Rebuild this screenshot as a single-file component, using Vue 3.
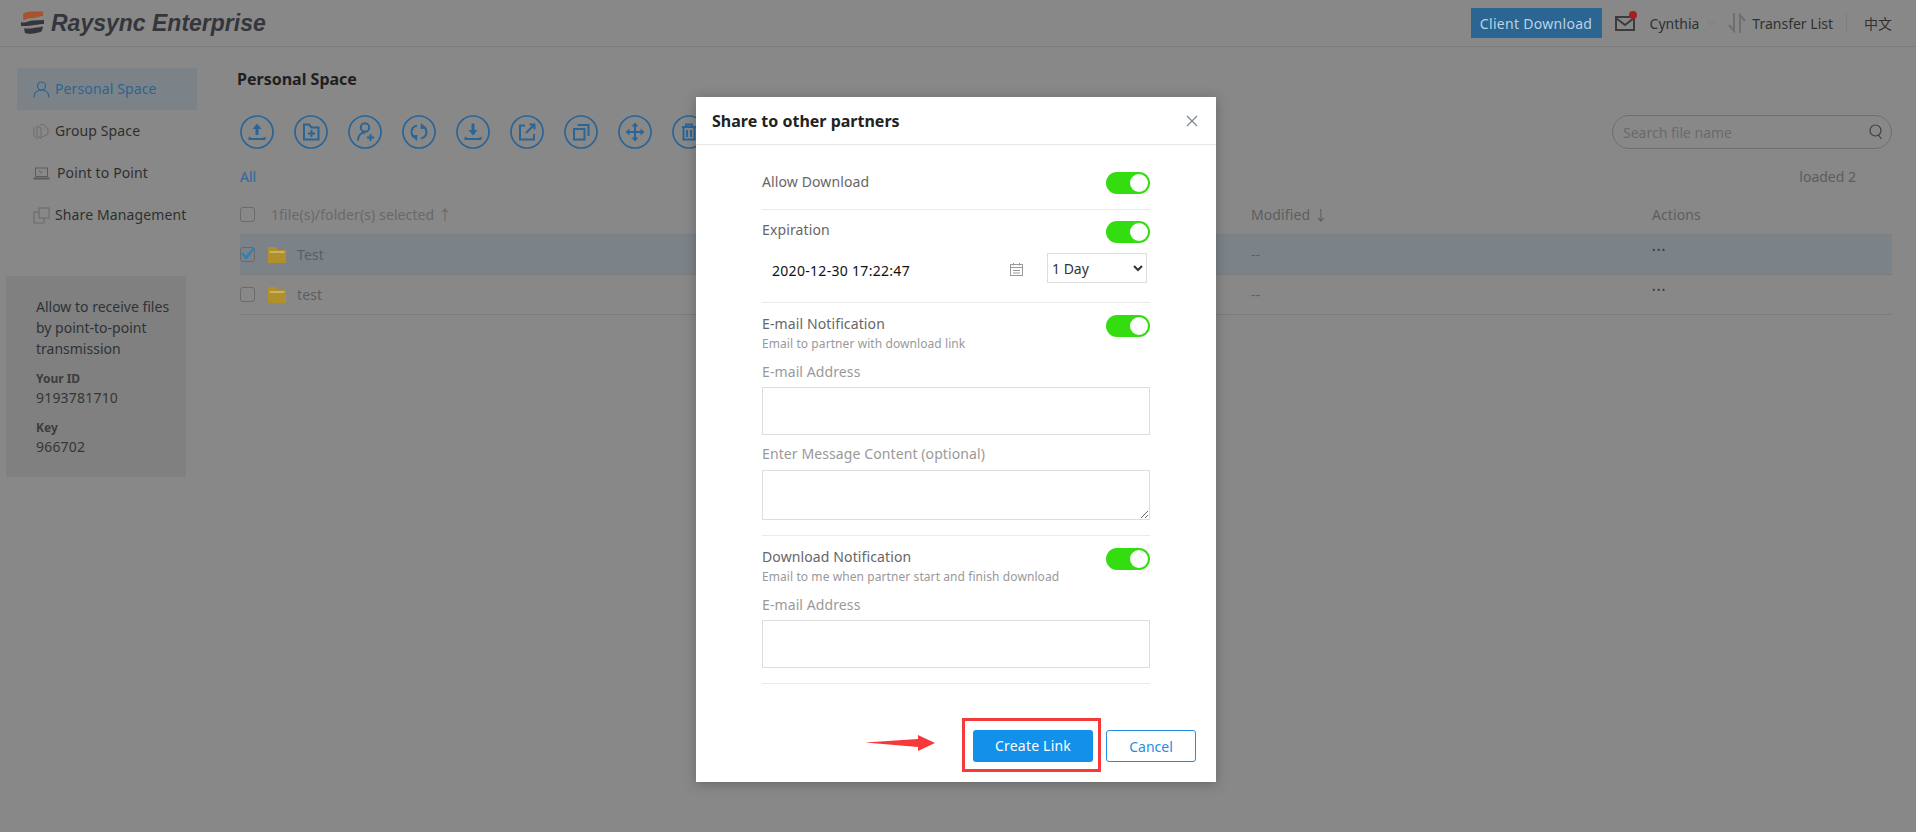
<script setup>
const navItems = [
  { label: 'Personal Space', icon: 'user', active: true },
  { label: 'Group Space', icon: 'group' },
  { label: 'Point to Point', icon: 'laptop', wide: true },
  { label: 'Share Management', icon: 'share' }
]
const rows = [
  { name: 'Test', selected: true },
  { name: 'test', selected: false }
]
</script>

<template>
  <div class="page">
    <header class="topbar">
      <div class="logo">
        <svg class="logo-mark" width="25" height="24" viewBox="0 0 25 24">
          <path d="M3 4 C3 1.5 8 0.5 14 0.5 L23 0.5 L23 5 C19 5 17 7 12 7 C8 7 5 8 3.5 10 Z" fill="#a9522e" />
          <path d="M1 11 C5 13 9 9.5 13 9.5 L24 9 L24 13 C19 13 8 15.5 1 15 Z" fill="#34363c" />
          <path d="M4 17.5 C9 18 18 16.5 23 15.5 L22 20 C19 22.5 8 23.5 5 22 Z" fill="#34363c" />
        </svg>
        <span class="logo-text">Raysync Enterprise</span>
      </div>
      <div class="top-actions">
        <button class="client-btn">Client Download</button>
        <span class="mail">
          <svg width="20" height="15" viewBox="0 0 20 15" fill="none" stroke="#3c3c3c" stroke-width="2">
            <rect x="1" y="1" width="18" height="13" />
            <path d="M1 2 L10 9 L19 2" />
          </svg>
          <i class="dot"></i>
        </span>
        <span class="top-text cynthia">Cynthia</span>
        <svg class="chev" width="9" height="6" viewBox="0 0 9 6" fill="none" stroke="#7c7c7c"><path d="M1 1 L4.5 5 L8 1" /></svg>
        <svg class="transfer" width="18" height="20" viewBox="0 0 18 20" fill="none" stroke="#6f6f6f" stroke-width="2">
          <path d="M6 0 V18 L1 12" />
          <path d="M12 20 V2 L17 8" />
        </svg>
        <span class="top-text transfer-text">Transfer List</span>
        <i class="top-sep"></i>
        <span class="top-text lang">中文</span>
      </div>
    </header>

    <div class="body">
      <aside class="sidebar">
        <nav>
          <div v-for="item in navItems" :key="item.label" class="nav-item" :class="{ active: item.active, wide: item.wide }">
            <svg v-if="item.icon === 'user'" class="nav-icon" width="17" height="17" viewBox="0 0 17 17" fill="none" stroke="#2d6491" stroke-width="1.2">
              <circle cx="8.5" cy="5" r="4" />
              <path d="M1 16.5 C1 11.5 4 9 8.5 9 C13 9 16 11.5 16 16.5" />
            </svg>
            <svg v-else-if="item.icon === 'group'" class="nav-icon" width="17" height="17" viewBox="0 0 17 17" fill="none" stroke="#6c6c6c">
              <path d="M1 4 V13 L5 16" />
              <path d="M4 3 V13 L8 15.5 V5 Z" />
              <path d="M7 2 L10 1 L15 6 L15 11 L9 14" />
            </svg>
            <svg v-else-if="item.icon === 'laptop'" class="nav-icon" width="17" height="17" viewBox="0 0 17 17" fill="none" stroke="#5c5c5c">
              <rect x="2.5" y="3" width="12" height="8.5" />
              <path d="M0.5 13.5 H16.5" stroke-width="2" />
              <path d="M6 6 L9 8" />
            </svg>
            <svg v-else class="nav-icon" width="17" height="17" viewBox="0 0 17 17" fill="none" stroke="#6a6a6a" stroke-width="1.1">
              <path d="M6 5 H1 V16 H11 V11" />
              <rect x="6" y="1" width="10" height="10" />
            </svg>
            <span class="nav-label">{{ item.label }}</span>
          </div>
        </nav>
        <div class="p2p">
          <p class="p2p-text">Allow to receive files by point-to-point transmission</p>
          <div class="p2p-label first">Your ID</div>
          <div class="p2p-value">9193781710</div>
          <div class="p2p-label">Key</div>
          <div class="p2p-value">966702</div>
        </div>
      </aside>

      <main class="main">
        <h2 class="heading">Personal Space</h2>
        <div class="toolbar">
          <div class="tools">
            <svg class="tool" viewBox="0 0 34 34" fill="none" stroke="#2b6596" stroke-width="2">
              <circle cx="17" cy="17" r="16" stroke-width="1.7" />
              <path d="M17 8.5 L12.5 14 H15.5 V20 H18.5 V14 H21.5 Z" fill="#2b6596" stroke="none" />
              <path d="M9.5 22 V24 H24.5 V22" />
            </svg>
            <svg class="tool" viewBox="0 0 34 34" fill="none" stroke="#2b6596" stroke-width="2">
              <circle cx="17" cy="17" r="16" stroke-width="1.7" />
              <path d="M10 9.5 H15 L17.5 12.5 H24.5 V24.5 H10 Z" />
              <path d="M17.5 15 V22 M14 18.5 H21" />
            </svg>
            <svg class="tool" viewBox="0 0 34 34" fill="none" stroke="#2b6596" stroke-width="2">
              <circle cx="17" cy="17" r="16" stroke-width="1.7" />
              <circle cx="17" cy="12.5" r="4.2" />
              <path d="M10 25.5 C10 21 12.5 17.5 17 17.5" />
              <path d="M22.5 19 V26 M19 22.5 H26" />
            </svg>
            <svg class="tool" viewBox="0 0 34 34" fill="none" stroke="#2b6596" stroke-width="2">
              <circle cx="17" cy="17" r="16" stroke-width="1.7" />
              <path d="M15 10.5 C11.5 11.5 9.5 14 9.5 17 C9.5 18.8 10.2 20.4 11.5 21.8" />
              <path d="M19 23.5 C22.5 22.5 24.5 20 24.5 17 C24.5 15.2 23.8 13.6 22.5 12.2" />
              <path d="M9 20.5 L15.5 20 L15 26 Z M25 13.5 L18.5 14 L19 8 Z" fill="#2b6596" stroke="none" />
            </svg>
            <svg class="tool" viewBox="0 0 34 34" fill="none" stroke="#2b6596" stroke-width="2">
              <circle cx="17" cy="17" r="16" stroke-width="1.7" />
              <path d="M17 20.5 L12.5 15 H15.5 V8.5 H18.5 V15 H21.5 Z" fill="#2b6596" stroke="none" />
              <path d="M9.5 22 V24 H24.5 V22" />
            </svg>
            <svg class="tool" viewBox="0 0 34 34" fill="none" stroke="#2b6596" stroke-width="2">
              <circle cx="17" cy="17" r="16" stroke-width="1.7" />
              <path d="M15 10.5 H10 V24.5 H24 V19" />
              <path d="M16 18 L24.5 9.5 M19.5 9.5 H24.5 V14.5" />
            </svg>
            <svg class="tool" viewBox="0 0 34 34" fill="none" stroke="#2b6596" stroke-width="2">
              <circle cx="17" cy="17" r="16" stroke-width="1.7" />
              <rect x="10" y="14" width="10.5" height="10.5" />
              <path d="M13.5 10 H24.5 V21" />
            </svg>
            <svg class="tool" viewBox="0 0 34 34" fill="none" stroke="#2b6596" stroke-width="2">
              <circle cx="17" cy="17" r="16" stroke-width="1.7" />
              <path d="M17 9 V25 M9 17 H25" />
              <path d="M17 7.5 L13.5 11.5 H20.5 Z M17 26.5 L13.5 22.5 H20.5 Z M7.5 17 L11.5 13.5 V20.5 Z M26.5 17 L22.5 13.5 V20.5 Z" fill="#2b6596" stroke="none" />
            </svg>
            <svg class="tool" viewBox="0 0 34 34" fill="none" stroke="#2b6596" stroke-width="2">
              <circle cx="17" cy="17" r="16" stroke-width="1.7" />
              <path d="M10 12 H24 M14 12 V9.5 H20 V12 M11.5 12 V24.5 H22.5 V12 M15 15 V22 M19 15 V22" />
            </svg>
          </div>
          <div class="search">
            <span class="search-text">Search file name</span>
            <svg width="14" height="16" viewBox="0 0 14 16" fill="none" stroke="#3f3f3f" stroke-width="1.2">
              <circle cx="6.5" cy="6.5" r="5.5" />
              <path d="M9.5 11 L12.5 15" />
            </svg>
          </div>
        </div>
        <div class="crumbs">
          <span class="all">All</span>
          <span class="loaded">loaded 2</span>
        </div>

        <div class="grid-row table-head">
          <div class="name-cell">
            <i class="check"></i>
            <span class="sel-text">1file(s)/folder(s) selected ↑</span>
          </div>
          <div>Modified ↓</div>
          <div>Actions</div>
        </div>
        <div v-for="row in rows" :key="row.name" class="grid-row file-row" :class="{ selected: row.selected }">
          <div class="name-cell">
            <i class="check">
              <svg v-if="row.selected" width="15" height="15" viewBox="0 0 15 15" fill="none" stroke="#2e7fb8" stroke-width="2.4">
                <path d="M2 7 L6 12 L14 2" />
              </svg>
            </i>
            <svg class="folder" width="18" height="16" viewBox="0 0 18 16">
              <path d="M0 0 H8 L10 3 H18 V16 H0 Z" fill="#b0902a" />
              <rect x="1.5" y="4" width="15" height="2" fill="#c8b26a" />
            </svg>
            <span>{{ row.name }}</span>
          </div>
          <div>--</div>
          <div class="dots">•••</div>
        </div>
      </main>
    </div>

    <section class="modal">
      <header class="modal-head">
        <h3>Share to other partners</h3>
        <svg width="12" height="12" viewBox="0 0 12 12" stroke="#7f8a94" stroke-width="1.3" fill="none">
          <path d="M1 1 L11 11 M11 1 L1 11" />
        </svg>
      </header>

      <div class="form">
        <div class="section s-allow">
          <div class="line">
            <span class="label">Allow Download</span>
            <i class="toggle"></i>
          </div>
        </div>

        <div class="section s-exp">
          <div class="line">
            <span class="label">Expiration</span>
            <i class="toggle"></i>
          </div>
          <div class="date-row">
            <span class="date">2020-12-30 17:22:47</span>
            <svg class="cal" width="13" height="13" viewBox="0 0 13 13" fill="none" stroke="#999">
              <rect x="0.5" y="1.5" width="12" height="11" />
              <path d="M0.5 4.5 H12.5 M3.5 0 V2.5 M9.5 0 V2.5 M3 7.5 H10 M3 10 H10" />
            </svg>
            <select class="period">
              <option>1 Day</option>
              <option>7 Days</option>
            </select>
          </div>
        </div>

        <div class="section s-mail">
          <div class="line">
            <div>
              <div class="label">E-mail Notification</div>
              <div class="hint">Email to partner with download link</div>
            </div>
            <i class="toggle"></i>
          </div>
          <div class="field-label first">E-mail Address</div>
          <input class="text-input mail-input" type="text" />
          <div class="field-label second">Enter Message Content (optional)</div>
          <textarea class="text-area"></textarea>
        </div>

        <div class="section s-notify">
          <div class="line">
            <div>
              <div class="label">Download Notification</div>
              <div class="hint">Email to me when partner start and finish download</div>
            </div>
            <i class="toggle"></i>
          </div>
          <div class="field-label first">E-mail Address</div>
          <input class="text-input notify-input" type="text" />
        </div>
      </div>

      <footer class="modal-foot">
        <svg class="arrow" width="71" height="17" viewBox="0 0 71 17">
          <path d="M0 7.5 L53 4 L53 0 L70 8 L53 16 L53 12 Z" fill="#f63a3a" />
        </svg>
        <span class="highlight">
          <button class="primary">Create Link</button>
        </span>
        <button class="ghost">Cancel</button>
      </footer>
    </section>
  </div>
</template>

<style scoped>
.page {
  position: relative;
  width: 1916px;
  height: 832px;
  overflow: hidden;
  background: #888888;
  color: #2f2f2f;
  font-family: "Noto Sans", "Noto Sans CJK SC", sans-serif;
  font-size: 14px;
}
.topbar {
  height: 46px;
  border-bottom: 1px solid #7b7b7b;
  display: flex;
  align-items: center;
  justify-content: space-between;
  padding: 0 24px 0 20px;
}
.logo { display: flex; align-items: center; gap: 6px; }
.logo-text {
  font-family: "Liberation Sans", sans-serif;
  font-weight: 700;
  font-style: italic;
  font-size: 23px;
  color: #34363c;
}
.top-actions { display: flex; align-items: center; }
.client-btn {
  width: 131px;
  height: 30px;
  border: 0;
  background: #2b6591;
  color: #b9d3e6;
  font: inherit;
  letter-spacing: 0.3px;
  padding: 0;
}
.mail { position: relative; display: flex; margin-left: 13px; }
.dot {
  position: absolute;
  top: -5px;
  right: -2px;
  width: 8px;
  height: 8px;
  border-radius: 50%;
  background: #a31f24;
}
.top-text { color: #2f3133; white-space: nowrap; }
.cynthia { margin-left: 15px; }
.chev { margin-left: 8px; }
.transfer { margin-left: 12px; }
.transfer-text { margin-left: 6px; }
.top-sep { width: 1px; height: 18px; background: #7d7d7d; margin: 0 17px 0 13px; }
.lang { font-size: 14px; }
.body { display: flex; }
.sidebar { width: 240px; flex: none; padding-top: 21px; }
.nav-item {
  width: 180px;
  height: 42px;
  box-sizing: border-box;
  margin-left: 17px;
  padding-left: 16px;
  display: flex;
  align-items: center;
  gap: 5px;
  color: #2f2f2f;
  white-space: nowrap;
  letter-spacing: 0.12px;
}
.nav-label { position: relative; top: -1px; }
.nav-item.wide { gap: 7px; }
.nav-item.active { background: #7c8388; color: #2d6491; }
.nav-icon { flex: none; }
.p2p {
  width: 180px;
  height: 201px;
  margin: 40px 0 0 6px;
  padding: 20px 10px 0 30px;
  box-sizing: border-box;
  background: #808080;
}
.p2p-text { margin: 0; line-height: 21px; color: #2f3236; }
.p2p-label { font-weight: 700; font-size: 12px; line-height: 18px; color: #3c3c3c; margin-top: 11px; }
.p2p-label.first { margin-top: 11px; }
.p2p-value { line-height: 20px; color: #363636; letter-spacing: 0.2px; }
.main { flex: 1; min-width: 0; padding: 21px 24px 0 0; }
.heading { margin: 0; font-size: 16px; line-height: 22px; font-weight: 700; color: #1f1f1f; margin-left: -3px; }
.toolbar { display: flex; justify-content: space-between; margin-top: 25px; }
.tools { display: flex; gap: 20px; }
.tool { width: 34px; height: 34px; flex: none; }
.search {
  width: 280px;
  height: 34px;
  box-sizing: border-box;
  border: 1px solid #6f6f6f;
  border-radius: 17px;
  padding: 0 8px 0 10px;
  display: flex;
  align-items: center;
  justify-content: space-between;
}
.search-text { color: #6a6a6a; }
.crumbs { display: flex; justify-content: space-between; margin-top: 18px; line-height: 20px; }
.all { color: #2f66a0; }
.loaded { color: #5d5d5d; margin-right: 36px; }
.grid-row {
  display: grid;
  grid-template-columns: 1011px 401px 1fr;
  align-items: center;
  color: #5e5e5e;
  box-sizing: border-box;
  letter-spacing: 0.1px;
}
.table-head { height: 38px; margin-top: 9px; padding-bottom: 2px; }
.file-row { height: 40px; border-bottom: 1px solid #7b7b7b; }
.file-row.selected { height: 41px; background: #7c8388; border-top: 1px solid #788085; }
.name-cell { display: flex; align-items: center; }
.check {
  width: 15px;
  height: 15px;
  box-sizing: border-box;
  border: 1px solid #6a6a6a;
  border-radius: 3px;
  display: block;
  position: relative;
}
.check svg { position: absolute; left: -1px; top: -2px; }
.sel-text { margin-left: 16px; color: #696969; }
.folder { margin: 0 11px 0 13px; }
.dots { font-size: 9px; letter-spacing: 1.5px; color: #3e3e3e; transform: translateY(-5px); }

.modal {
  position: absolute;
  left: 696px;
  top: 97px;
  width: 520px;
  height: 685px;
  background: #fff;
  display: flex;
  flex-direction: column;
  box-shadow: 0 2px 12px rgba(0, 0, 0, 0.25);
}
.modal-head {
  height: 48px;
  flex: none;
  box-sizing: border-box;
  border-bottom: 1px solid #e8e8e8;
  padding: 0 18px 0 16px;
  display: flex;
  align-items: center;
  justify-content: space-between;
}
.modal-head h3 { margin: 0; font-size: 16px; font-weight: 700; color: #222; }
.form { margin: 0 66px; flex: none; }
.section { border-bottom: 1px solid #eaeaea; box-sizing: border-box; }
.s-allow { height: 65px; padding-top: 27px; }
.s-exp { height: 93px; padding-top: 11px; }
.s-mail { height: 233px; padding-top: 12px; }
.s-notify { height: 148px; padding-top: 12px; }
.line { display: flex; justify-content: space-between; align-items: flex-start; }
.label { color: #666; line-height: 20px; margin-top: -1px; letter-spacing: 0.12px; }
.s-allow .label { display: block; margin-top: 0; }
.hint { color: #999; font-size: 12px; line-height: 17px; margin-top: 1px; letter-spacing: 0.08px; }
.toggle {
  display: block;
  position: relative;
  width: 44px;
  height: 22px;
  flex: none;
  border-radius: 11px;
  background: #33dd10;
}
.toggle::after {
  content: "";
  position: absolute;
  right: 2px;
  top: 2px;
  width: 18px;
  height: 18px;
  border-radius: 50%;
  background: #fff;
}
.date-row { display: flex; align-items: center; margin-top: 10px; padding-left: 10px; }
.date { width: 238px; color: #111; padding-top: 5px; letter-spacing: 0.3px; }
.cal { margin-top: 2px; }
.period {
  width: 100px;
  height: 30px;
  margin-left: 24px;
  border: 1px solid #ddd;
  background: #fff;
  color: #333;
  font: inherit;
  padding-left: 0;
}
.field-label { color: #999; line-height: 20px; letter-spacing: 0.1px; }
.field-label.first { margin-top: 10px; margin-bottom: 5px; }
.field-label.second { margin-top: 9px; margin-bottom: 6px; }
.text-input, .text-area {
  display: block;
  width: 100%;
  box-sizing: border-box;
  border: 1px solid #ddd;
  padding: 0;
  margin: 0;
  background: #fff;
  outline: 0;
}
.mail-input { height: 48px; }
.notify-input { height: 48px; }
.text-area { height: 50px; }
.modal-foot { position: relative; flex: 1; display: flex; justify-content: flex-end; align-items: flex-start; padding: 46px 20px 0 0; }
.arrow { position: absolute; left: 169px; top: 51px; }
.highlight {
  border: 3px solid #f63a3a;
  padding: 9px 5px 7px 8px;
  margin-right: 5px;
  margin-top: -12px;
  display: block;
  line-height: 0;
}
button { cursor: default; }
.primary {
  width: 120px;
  height: 32px;
  border: 0;
  border-radius: 3px;
  background: #1290ea;
  color: #fff;
  font: inherit;
  letter-spacing: 0.2px;
  padding: 0;
}
.ghost {
  width: 90px;
  height: 32px;
  box-sizing: border-box;
  border: 1px solid #1f8ee6;
  border-radius: 3px;
  background: #fff;
  color: #1f8ee6;
  font: inherit;
  padding: 0;
}
</style>
